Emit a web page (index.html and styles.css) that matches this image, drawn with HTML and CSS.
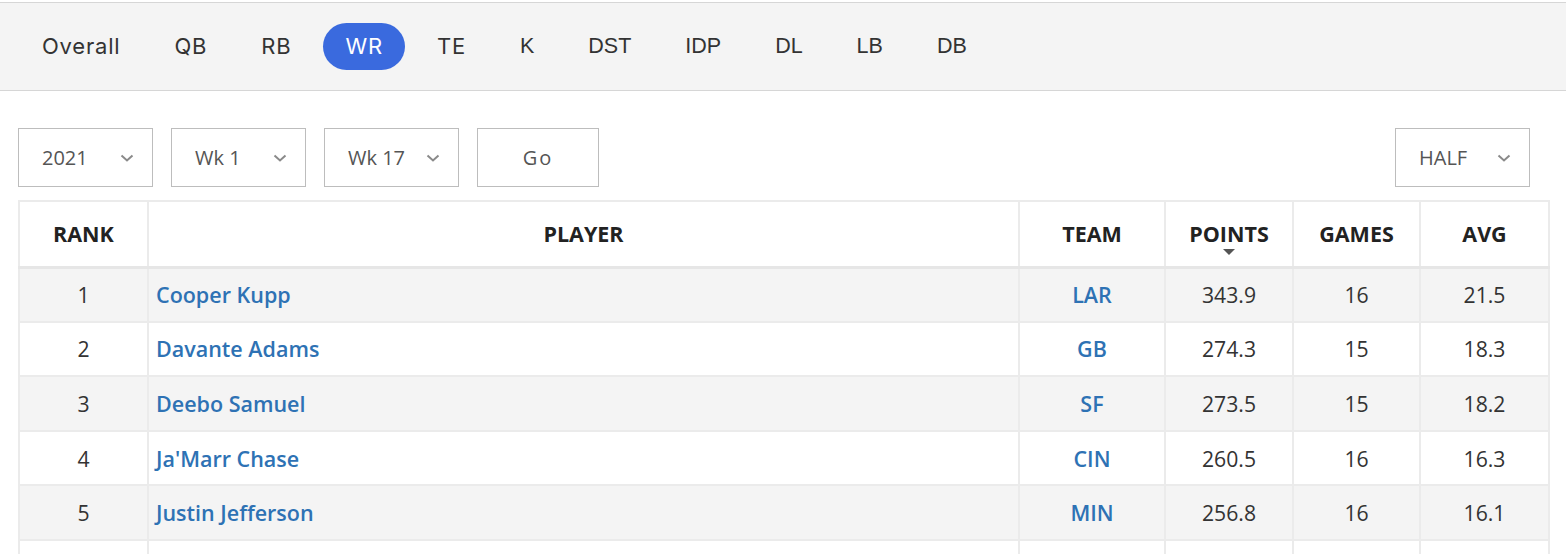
FILE: index.html
```html
<!DOCTYPE html>
<html lang="en">
<head>
<meta charset="utf-8">
<title>WR Rankings</title>
<link rel="stylesheet" href="styles.css">
</head>
<body>
<nav class="posnav">
  <a class="pos geo">Overall</a>
  <a class="pos geo">QB</a>
  <a class="pos geo">RB</a>
  <a class="pos geo active">WR</a>
  <a class="pos geo">TE</a>
  <a class="pos">K</a>
  <a class="pos">DST</a>
  <a class="pos">IDP</a>
  <a class="pos">DL</a>
  <a class="pos">LB</a>
  <a class="pos">DB</a>
</nav>
<main class="content">
  <div class="filters">
    <div class="filter-group">
      <div class="select"><span>2021</span><svg class="chev" viewBox="0 0 14 8"><polyline points="1.5,1.5 7,6.5 12.5,1.5"/></svg></div>
      <div class="select"><span>Wk 1</span><svg class="chev" viewBox="0 0 14 8"><polyline points="1.5,1.5 7,6.5 12.5,1.5"/></svg></div>
      <div class="select"><span>Wk 17</span><svg class="chev" viewBox="0 0 14 8"><polyline points="1.5,1.5 7,6.5 12.5,1.5"/></svg></div>
      <div class="go">Go</div>
    </div>
    <div class="select scoring"><span>HALF</span><svg class="chev" viewBox="0 0 14 8"><polyline points="1.5,1.5 7,6.5 12.5,1.5"/></svg></div>
  </div>
  <table class="ranks">
    <colgroup>
      <col class="c-rank"><col class="c-player"><col class="c-team"><col class="c-points"><col class="c-games"><col class="c-avg">
    </colgroup>
    <thead>
      <tr>
        <th>RANK</th>
        <th>PLAYER</th>
        <th>TEAM</th>
        <th class="sorted">POINTS<span class="sort-arrow"></span></th>
        <th>GAMES</th>
        <th>AVG</th>
      </tr>
    </thead>
    <tbody>
      <tr><td>1</td><td class="player"><a>Cooper Kupp</a></td><td class="team"><a>LAR</a></td><td>343.9</td><td>16</td><td>21.5</td></tr>
      <tr><td>2</td><td class="player"><a>Davante Adams</a></td><td class="team"><a>GB</a></td><td>274.3</td><td>15</td><td>18.3</td></tr>
      <tr><td>3</td><td class="player"><a>Deebo Samuel</a></td><td class="team"><a>SF</a></td><td>273.5</td><td>15</td><td>18.2</td></tr>
      <tr><td>4</td><td class="player"><a>Ja'Marr Chase</a></td><td class="team"><a>CIN</a></td><td>260.5</td><td>16</td><td>16.3</td></tr>
      <tr><td>5</td><td class="player"><a>Justin Jefferson</a></td><td class="team"><a>MIN</a></td><td>256.8</td><td>16</td><td>16.1</td></tr>
      <tr><td>&nbsp;</td><td class="player">&nbsp;</td><td>&nbsp;</td><td>&nbsp;</td><td>&nbsp;</td><td>&nbsp;</td></tr>
    </tbody>
  </table>
</main>
</body>
</html>
```
FILE: styles.css
```css
* { box-sizing: border-box; }
html, body { margin: 0; padding: 0; background: #fff; }
body { font-family: "Open Sans", "Liberation Sans", sans-serif; color: #333; overflow: hidden; }

.posnav {
  margin-top: 2px;
  height: 89px;
  background: #f4f4f4;
  border-top: 1px solid #d6d6d6;
  border-bottom: 1px solid #d6d6d6;
  display: flex;
  align-items: center;
  gap: 10px;
  padding-left: 20px;
}
.pos {
  font-family: "Liberation Sans", Arial, sans-serif;
  font-size: 21.5px;
  color: #333;
  padding: 0 22px;
  height: 47px;
  line-height: 47px;
  border-radius: 24px;
  white-space: nowrap;
}
.pos.geo { font-family: Inter, "Noto Sans", sans-serif; font-size: 22px; letter-spacing: 0.8px; }
.pos.active { background: #3a6ade; color: #fff; }

.content { padding: 37px 18px 0; }

.filters {
  display: flex;
  justify-content: space-between;
  margin-bottom: 13px;
}
.filter-group { display: flex; gap: 18px; }
.select, .go {
  height: 59px;
  border: 1px solid #bdbdbd;
  font-size: 20px;
  color: #555;
  display: flex;
  align-items: center;
}
.select {
  width: 135px;
  padding: 0 18px 0 23px;
  justify-content: space-between;
}
.select.scoring { margin-right: 18px; }
.go {
  width: 122px;
  justify-content: center;
  letter-spacing: 2px;
}
.chev { width: 14px; height: 8px; fill: none; stroke: #8a8a8a; stroke-width: 2; }

.ranks {
  width: 1530px;
  border-collapse: collapse;
  table-layout: fixed;
  border: 2px solid #ebebeb;
}
.c-rank { width: 129px; }
.c-player { width: 871px; }
.c-team { width: 146px; }
.c-points { width: 128px; }
.c-games { width: 127px; }
.c-avg { width: 129px; }

.ranks th, .ranks td {
  border-left: 2px solid #ebebeb;
  border-right: 2px solid #ebebeb;
  text-align: center;
}
.ranks th {
  height: 66px;
  font-weight: 700;
  font-size: 21.5px;
  color: #222;
  background: #fff;
  border-bottom: 3px solid #e6e6e6;
  position: relative;
}
.sort-arrow {
  position: absolute;
  left: 50%;
  top: 47px;
  margin-left: -6px;
  border-left: 6px solid transparent;
  border-right: 6px solid transparent;
  border-top: 6px solid #555;
}
.ranks td {
  height: 54.6px;
  font-size: 21.2px;
  color: #333;
  border-bottom: 2px solid #ebebeb;
  padding: 0;
}
.ranks tbody tr:nth-child(odd) td { background: #f4f4f4; }
.ranks td.player { text-align: left; padding-left: 7px; }
.ranks td a { color: #2e72b4; font-weight: 600; font-size: 21.5px; }
```
